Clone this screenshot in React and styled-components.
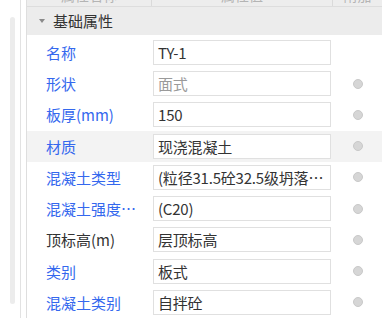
import React from "react";
import styled, { createGlobalStyle } from "styled-components";

const GlobalStyle = createGlobalStyle`
  html, body {
    margin: 0;
    padding: 0;
    background: #fff;
  }
  body {
    font-family: "Noto Sans CJK SC", "Noto Sans", sans-serif;
  }
`;

const rows = [
  { label: "名称", value: "TY-1", link: true, radio: false },
  { label: "形状", value: "面式", link: true, disabled: true },
  { label: "板厚(mm)", value: "150", link: true },
  { label: "材质", value: "现浇混凝土", link: true, active: true },
  { label: "混凝土类型", value: "(粒径31.5砼32.5级坍落度35~50)", link: true },
  { label: "混凝土强度等级", value: "(C20)", link: true },
  { label: "顶标高(m)", value: "层顶标高", link: false },
  { label: "类别", value: "板式", link: true },
  { label: "混凝土类别", value: "自拌砼", link: true },
];

const App = () => (
  <>
    <GlobalStyle />
    <Page>
      <Gutter>
        <Thumb />
      </Gutter>
      <Splitter />
      <Table>
        <HeaderRow>
          <HeaderCell>
            <HeaderText>属性名称</HeaderText>
          </HeaderCell>
          <HeaderCell>
            <HeaderText>属性值</HeaderText>
          </HeaderCell>
          <HeaderCell last>
            <HeaderText>附加</HeaderText>
          </HeaderCell>
        </HeaderRow>
        <GroupRow>
          <Caret />
          <GroupTitle>基础属性</GroupTitle>
        </GroupRow>
        <Body>
          {rows.map((r) => (
            <Row key={r.label} active={r.active}>
              <Label link={r.link}>{r.label}</Label>
              <ValueCell>
                <Input disabled={r.disabled}>{r.value}</Input>
              </ValueCell>
              <ExtraCell>{r.radio !== false && <Radio />}</ExtraCell>
            </Row>
          ))}
        </Body>
      </Table>
    </Page>
  </>
);

export default App;

const Page = styled.div`
  display: flex;
  width: 387px;
  height: 318px;
  overflow: hidden;
  background: #fff;
`;

const Gutter = styled.div`
  width: 10px;
  padding-left: 10px;
  padding-top: 17px;
  flex-shrink: 0;
`;

const Thumb = styled.div`
  width: 5px;
  height: 287px;
  border-radius: 3px;
  background: #ececec;
`;

const Splitter = styled.div`
  width: 5px;
  flex-shrink: 0;
  border-left: 1px solid #e2e2e2;
  border-right: 1px solid #dedede;
`;

const Table = styled.div`
  width: 355px;
  flex-shrink: 0;
  display: flex;
  flex-direction: column;
`;

const columns = "125px 181px 49px";

const HeaderRow = styled.div`
  display: grid;
  grid-template-columns: ${columns};
  height: 6px;
  overflow: hidden;
  background: #ededed;
  border-bottom: 1px solid #dddddd;
`;

const HeaderCell = styled.div`
  display: flex;
  justify-content: center;
  align-items: flex-end;
  height: 6px;
  overflow: hidden;
  border-right: ${({ last }) => (last ? "none" : "1px solid #dadada")};
`;

const HeaderText = styled.span`
  font-size: 14px;
  line-height: 14px;
  margin-bottom: 4px;
  color: #b4b4b4;
`;

const GroupRow = styled.div`
  display: flex;
  align-items: center;
  height: 30px;
  background: #ececec;
  padding-left: 12px;
`;

const Caret = styled.span`
  width: 0;
  height: 0;
  border-left: 3px solid transparent;
  border-right: 3px solid transparent;
  border-top: 4px solid #8a8a8a;
  margin-right: 8px;
`;

const GroupTitle = styled.span`
  font-size: 15px;
  color: #333;
`;

const Body = styled.div`
  padding-top: 2px;
`;

const Row = styled.div`
  display: grid;
  grid-template-columns: ${columns};
  height: 31.25px;
  align-items: center;
  background: ${({ active }) => (active ? "#f3f3f3" : "#fff")};
`;

const Label = styled.div`
  padding-left: 19px;
  padding-right: 10px;
  font-size: 15px;
  color: ${({ link }) => (link ? "#3468ee" : "#333")};
  white-space: nowrap;
  overflow: hidden;
  text-overflow: ellipsis;
`;

const ValueCell = styled.div`
  padding-left: 1px;
  padding-right: 2px;
`;

const Input = styled.div`
  box-sizing: border-box;
  height: 25px;
  line-height: 23px;
  border: 1px solid #e0e0e0;
  background: #fff;
  padding: 0 3px 0 4px;
  font-size: 15px;
  letter-spacing: -0.2px;
  color: ${({ disabled }) => (disabled ? "#9a9a9a" : "#333")};
  white-space: nowrap;
  overflow: hidden;
  text-overflow: ellipsis;
`;

const ExtraCell = styled.div`
  display: flex;
  justify-content: center;
  align-items: center;
`;

const Radio = styled.span`
  box-sizing: border-box;
  width: 10px;
  height: 10px;
  border-radius: 50%;
  background: #d6d6d6;
  border: 1px solid #c9c9c9;
`;
